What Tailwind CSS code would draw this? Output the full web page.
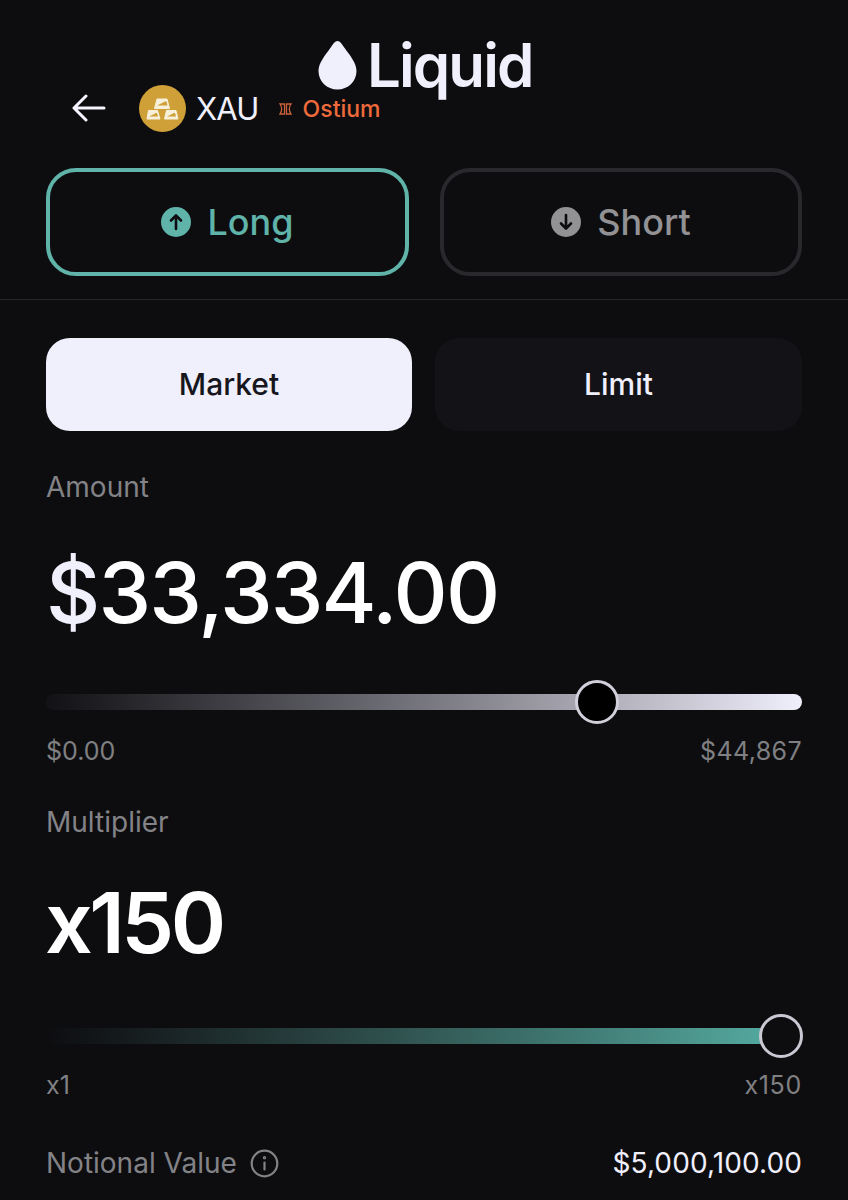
<!DOCTYPE html>
<html lang="en">
<head>
  <meta charset="UTF-8" />
  <title>Liquid - XAU</title>
  <script src="https://cdn.jsdelivr.net/npm/@tailwindcss/browser@4"></script>
</head>
<body class="bg-[#0d0d10] text-[#f0effc] font-['Inter',sans-serif] h-[1200px] overflow-hidden">
  <!-- watermark logo, sits over the header -->
  <div class="absolute left-[318px] top-[31px] flex items-center gap-[10px]">
    <svg width="39" height="50" viewBox="0 0 39 50"><path d="M19.5 1C22 1 24 4 27 8.500C32 15.500 38.500 23 38.500 31C38.500 41.500 30 49.500 19.500 49.500C9 49.500 .5 41.500 .5 31C.5 23 7 15.500 12 8.500C15 4 17 1 19.500 1Z" fill="#f0effc"/></svg>
    <span class="text-[60px] leading-[68px] font-semibold tracking-[-1.900px] text-[#f0effc]">Liquid</span>
  </div>

  <header class="h-[168px] pl-[72px] pt-[85px] flex items-start">
    <svg class="mt-[8px]" width="34" height="30" viewBox="0 0 34 30" fill="none" stroke="#f5f4ff" stroke-width="3" stroke-linecap="round" stroke-linejoin="round"><path d="M32 15H2.500M14 3L2 15l12 12"/></svg>
    <div class="ml-[33px] w-[47px] h-[47px] rounded-full bg-[#cf9f38] flex items-center justify-center">
      <svg width="33" height="22" viewBox="0 0 33 22">
        <path d="M11 1H21L23.500 10.500H8.500Z" fill="#f7f1dc" stroke="#f7f1dc" stroke-linejoin="round"/>
        <path d="M2.500 12.500H11.500L14 21H1Z" fill="#f7f1dc" stroke="#f7f1dc" stroke-linejoin="round"/>
        <path d="M20.500 12.500H30L32 21H18.500Z" fill="#f7f1dc" stroke="#f7f1dc" stroke-linejoin="round"/>
        <path d="M11 7.500L19 3.500H20.500L21.500 7.500ZM3 18.500L10 15H11L12 18.500ZM21 18.500L28 15H29L30 18.500Z" fill="#cf9f38"/>
      </svg>
    </div>
    <span class="ml-[10px] text-[31px] leading-[47px] tracking-[-.8px] text-[#f0effc]">XAU</span>
    <svg class="ml-[20px] mt-[18px]" width="13" height="12" viewBox="0 0 13 12" fill="none" stroke="#c9623a" stroke-width="1.300"><path d="M1 1H5.500V11H1C3 8 3 4 1 1ZM12 1H7.500V11H12C10 8 10 4 12 1Z"/></svg>
    <span class="ml-[11px] mt-[9px] text-[23px] leading-[30px] font-medium text-[#ee6a3a]">Ostium</span>
  </header>

  <main class="px-[46px]">
    <div class="flex justify-between">
      <button class="w-[363px] h-[108px] rounded-[30px] border-[4px] border-[#5fb3a9] flex items-center justify-center gap-[16px] text-[#5fb3a9]">
        <svg width="30" height="30" viewBox="0 0 30 30"><circle cx="15" cy="15" r="15" fill="#5fb3a9"/><path d="M15 22V9M10 13.500L15 8.500L20 13.500" fill="none" stroke="#0d0d10" stroke-width="2.600" stroke-linecap="round" stroke-linejoin="round"/></svg>
        <span class="text-[36px] leading-[44px] font-medium">Long</span>
      </button>
      <button class="w-[362px] h-[108px] rounded-[30px] border-[4px] border-[#29292d] flex items-center justify-center gap-[16px] text-[#929295]">
        <svg width="30" height="30" viewBox="0 0 30 30"><circle cx="15" cy="15" r="15" fill="#929295"/><path d="M15 8V21M10 16.500L15 21.500L20 16.500" fill="none" stroke="#0d0d10" stroke-width="2.600" stroke-linecap="round" stroke-linejoin="round"/></svg>
        <span class="text-[36px] leading-[44px] font-medium">Short</span>
      </button>
    </div>
  </main>

  <div class="mt-[23px] border-t border-[#27272a]"></div>

  <main class="px-[46px]">
    <div class="mt-[38px] flex justify-between">
      <button class="w-[366px] h-[93px] rounded-[24px] bg-[#f0effc] text-[#16161c] text-[30px] font-medium">Market</button>
      <button class="w-[367px] h-[93px] rounded-[24px] bg-[#121217] text-[#f0effc] text-[30px] font-medium">Limit</button>
    </div>

    <div class="mt-[38px] text-[28px] leading-[36px] text-[#838387]">Amount</div>
    <div class="mt-[38px] text-[84px] leading-[100px] font-[550] tracking-[-1.800px] text-white"><span class="text-[#f0effc]">$</span>33,334.00</div>

    <div class="relative mt-[51px] h-[16px] rounded-full bg-gradient-to-r from-[#121216] to-[#f0effc]">
      <div class="absolute left-[529px] top-[-14px] w-[44px] h-[44px] rounded-full bg-black border-[3px] border-[#d0cfda]"></div>
    </div>
    <div class="mt-[26px] flex justify-between text-[25px] leading-[30px] text-[#808083]">
      <span>$0.00</span><span class="tracking-[.4px]">$44,867</span>
    </div>

    <div class="mt-[38px] text-[28px] leading-[36px] text-[#838387]">Multiplier</div>
    <div class="mt-[33px] -ml-[1px] text-[84px] leading-[100px] font-semibold tracking-[-3.500px] text-white">x150</div>

    <div class="relative mt-[55px] h-[16px] rounded-full bg-gradient-to-r from-[#0d0d10] to-[#57b1a6]">
      <div class="absolute left-[713px] top-[-14px] w-[44px] h-[44px] rounded-full bg-[#0d0d10] border-[3px] border-[#c9c8d3]"></div>
    </div>
    <div class="mt-[26px] flex justify-between text-[25px] leading-[30px] text-[#808083]">
      <span>x1</span><span class="tracking-[.7px]">x150</span>
    </div>

    <div class="mt-[45px] flex justify-between items-center">
      <div class="flex items-center gap-[13px] text-[28px] leading-[36px] text-[#838387]">
        <span>Notional Value</span>
        <svg width="29" height="29" viewBox="0 0 29 29" fill="none" stroke="#838387" stroke-width="2.200" stroke-linecap="round"><circle cx="14.500" cy="14.500" r="12.800"/><path d="M14.500 13.500V20.500"/><circle cx="14.500" cy="8.800" r=".6" fill="#838387"/></svg>
      </div>
      <span class="text-[28px] leading-[36px] tracking-[.1px] text-[#f0effc]">$5,000,100.00</span>
    </div>
  </main>
</body>
</html>
